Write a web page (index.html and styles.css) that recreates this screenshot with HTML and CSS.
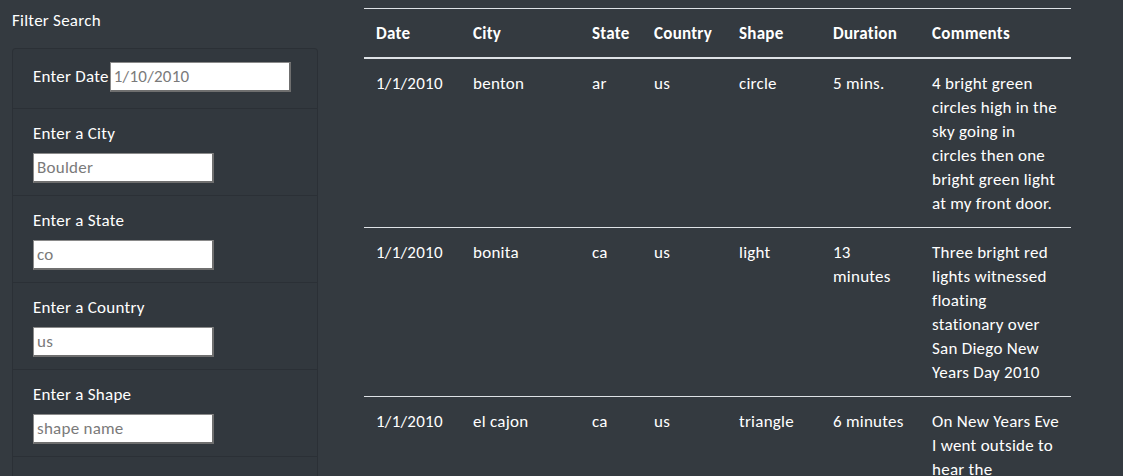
FILE: index.html
```html
<!DOCTYPE html>
<html lang="en">
<head>
<meta charset="utf-8">
<title>UFO Sightings</title>
<link rel="stylesheet" href="styles.css">
</head>
<body>
<div class="page">
  <aside class="sidebar">
    <div class="sidebar-title">Filter Search</div>
    <ul class="filters">
      <li class="filter-item filter-item-inline">
        <label class="inline-label" for="datetime">Enter Date</label>
        <input class="filter-input" id="datetime" type="text" placeholder="1/10/2010">
      </li>
      <li class="filter-item">
        <label class="block-label" for="city">Enter a City</label>
        <input class="filter-input" id="city" type="text" placeholder="Boulder">
      </li>
      <li class="filter-item">
        <label class="block-label" for="state">Enter a State</label>
        <input class="filter-input" id="state" type="text" placeholder="co">
      </li>
      <li class="filter-item">
        <label class="block-label" for="country">Enter a Country</label>
        <input class="filter-input" id="country" type="text" placeholder="us">
      </li>
      <li class="filter-item">
        <label class="block-label" for="shape">Enter a Shape</label>
        <input class="filter-input" id="shape" type="text" placeholder="shape name">
      </li>
      <li class="filter-item filter-item-spacer"></li>
    </ul>
  </aside>
  <main class="content">
    <table class="ufo-table">
      <colgroup>
        <col class="c-date"><col class="c-city"><col class="c-state"><col class="c-country"><col class="c-shape"><col class="c-duration"><col class="c-comments">
      </colgroup>
      <thead>
        <tr><th>Date</th><th>City</th><th>State</th><th>Country</th><th>Shape</th><th>Duration</th><th>Comments</th></tr>
      </thead>
      <tbody>
        <tr><td>1/1/2010</td><td>benton</td><td>ar</td><td>us</td><td>circle</td><td>5 mins.</td><td>4 bright green circles high in the sky going in circles then one bright green light at my front door.</td></tr>
        <tr><td>1/1/2010</td><td>bonita</td><td>ca</td><td>us</td><td>light</td><td>13 minutes</td><td>Three bright red lights witnessed floating stationary over San Diego New Years Day 2010</td></tr>
        <tr><td>1/1/2010</td><td>el cajon</td><td>ca</td><td>us</td><td>triangle</td><td>6 minutes</td><td><span class="nowrap">On New Years Eve</span> I went outside to hear the</td></tr>
      </tbody>
    </table>
  </main>
</div>
</body>
</html>
```

FILE: styles.css
```css
* { box-sizing: border-box; }

html, body {
  margin: 0;
  padding: 0;
  background: #343a40;
  color: #fff;
  font-family: Carlito, Lato, "Liberation Sans", sans-serif;
  font-size: 17px;
  letter-spacing: 0.25px;
  line-height: 24px;
  overflow: hidden;
}

.page {
  display: flex;
  align-items: flex-start;
  padding: 9px 0 0 12px;
  gap: 46px;
}

.sidebar {
  width: 306px;
  flex: none;
}

.sidebar-title {
  margin-bottom: 15px;
  color: #fff;
}

.filters {
  list-style: none;
  margin: 0;
  padding: 0;
  border: 1px solid rgba(0, 0, 0, 0.13);
  border-radius: 4px;
  background: #32383e;
}

.filter-item {
  padding: 13px 20px 12px;
  border-bottom: 1px solid rgba(0, 0, 0, 0.13);
}

.filter-item-inline {
  display: flex;
  align-items: center;
  gap: 1px;
  padding: 13px 20px 16px;
}

.filter-item-spacer {
  height: 60px;
  border-bottom: none;
}

.inline-label {
  display: block;
}

.block-label {
  display: block;
  margin-bottom: 7px;
}

.filter-input {
  display: block;
  width: 181px;
  height: 30px;
  padding: 1px 3px;
  border: 1px solid #8a8a8a;
  border-bottom: 2px solid #6f6f6f;
  border-right: 2px solid #6f6f6f;
  background: #fff;
  font-family: Carlito, Lato, "Liberation Sans", sans-serif;
  font-size: 17px;
  letter-spacing: 0.25px;
  color: #333;
}

.filter-input::placeholder {
  color: #7a7a7a;
}

.content {
  flex: none;
  margin-top: -1px;
}

.ufo-table {
  width: 707px;
  border-collapse: collapse;
  table-layout: fixed;
  color: #fff;
  background: #343a40;
}

.c-date { width: 97px; }
.c-city { width: 119px; }
.c-state { width: 62px; }
.c-country { width: 85px; }
.c-shape { width: 94px; }
.c-duration { width: 99px; }
.c-comments { width: 151px; }

.ufo-table th,
.ufo-table td {
  padding: 13px 12px 11px;
  text-align: left;
  vertical-align: top;
  border-top: 1px solid #dee2e6;
}

.ufo-table th {
  font-weight: 800;
  border-bottom: 2px solid #dee2e6;
}

.nowrap {
  white-space: nowrap;
}
```
